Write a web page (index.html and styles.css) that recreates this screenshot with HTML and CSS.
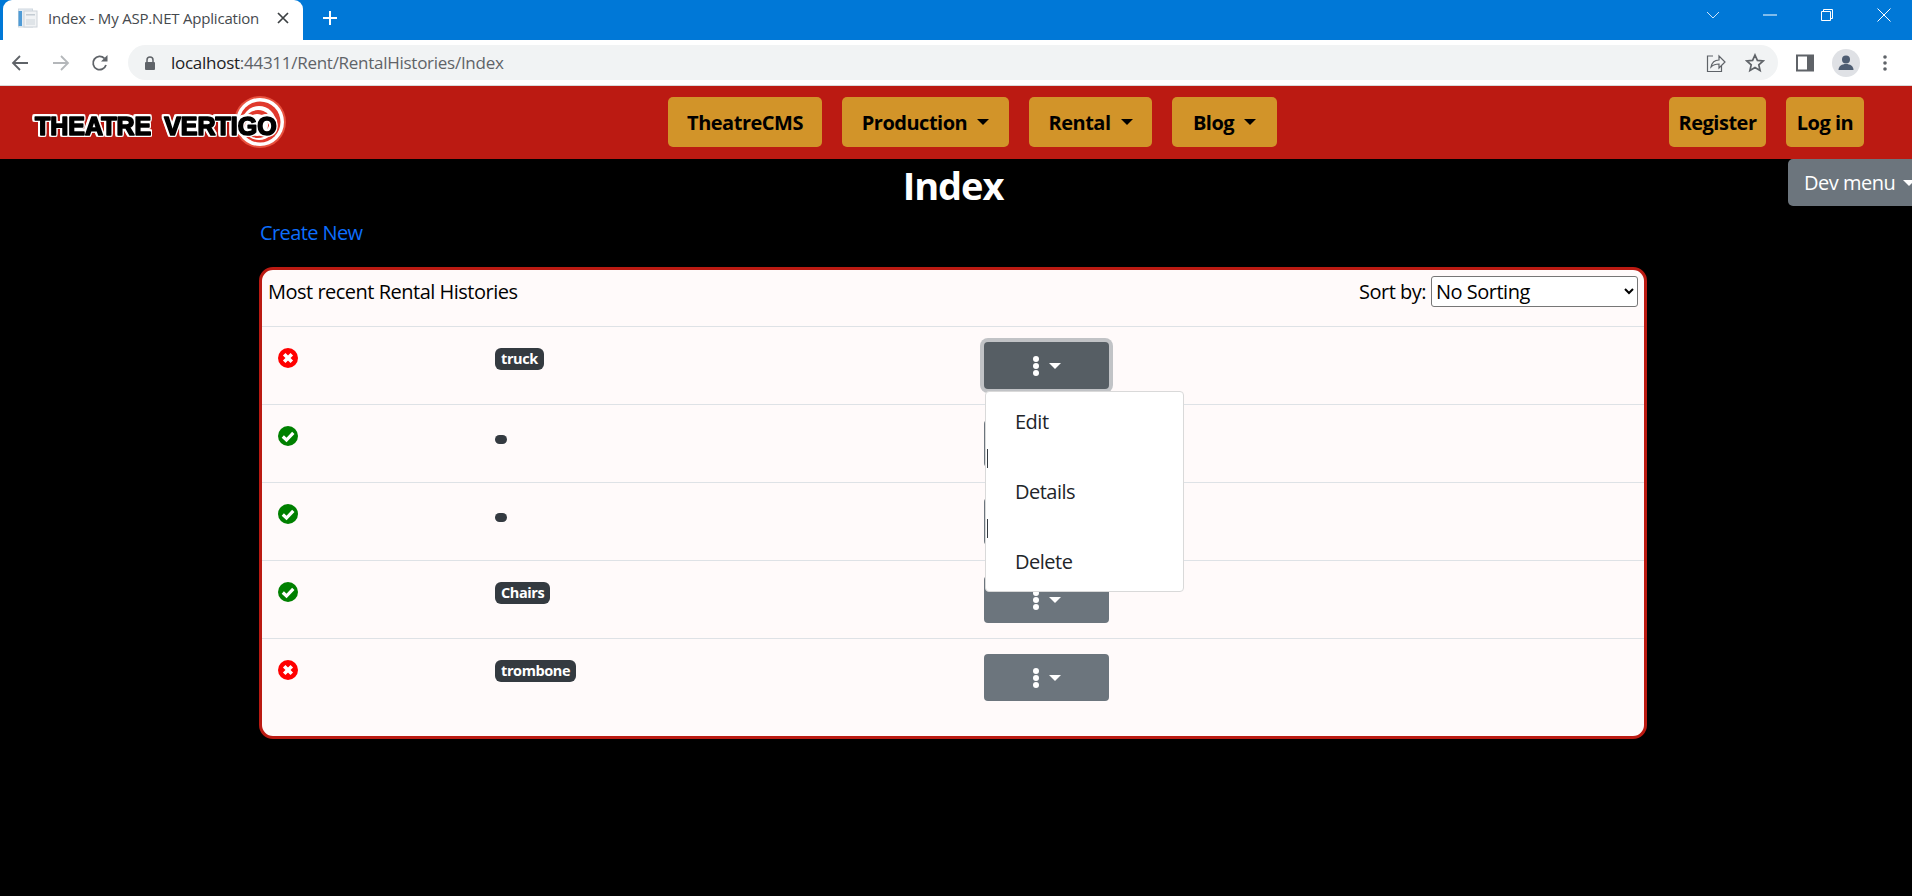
FILE: index.html
```html
<!DOCTYPE html>
<html lang="en">
<head>
<meta charset="utf-8">
<title>Index - My ASP.NET Application</title>
<link rel="stylesheet" href="styles.css">
</head>
<body>
<div class="tabbar">
  <div class="tab">
    <svg class="favicon" viewBox="0 0 20 20" width="20" height="20"><rect x="0.5" y="1" width="14" height="18" fill="#e6edf3" stroke="#cfd8df"/><rect x="0.5" y="3" width="3.5" height="15" fill="#4f9bd6"/><rect x="6" y="3" width="13" height="16" fill="#f1f3f5" stroke="#cdd3d9"/><rect x="8" y="11" width="9" height="6" fill="#dfe4e8"/><rect x="8" y="6" width="9" height="1.5" fill="#c4ccd3"/></svg>
    <span class="tab-title">Index - My ASP.NET Application</span>
    <svg class="tab-close" viewBox="0 0 12 12" width="12" height="12"><path d="M1 1l10 10M11 1L1 11" stroke="#3c4043" stroke-width="1.7" fill="none"/></svg>
  </div>
  <svg class="newtab" viewBox="0 0 14 14" width="14" height="14"><path d="M7 0v14M0 7h14" stroke="#fff" stroke-width="2" fill="none"/></svg>
  <div class="winctl">
    <svg viewBox="0 0 14 14" width="14" height="14"><path d="M1 4l6 6 6-6" stroke="#cfe4f7" fill="none"/></svg>
    <svg viewBox="0 0 14 14" width="14" height="14"><path d="M0 7h14" stroke="#fff" fill="none"/></svg>
    <svg viewBox="0 0 14 14" width="14" height="14"><path d="M1.5 3.5h9v9h-9zM3.5 3.5v-2h9v9h-2" stroke="#fff" fill="none"/></svg>
    <svg viewBox="0 0 14 14" width="14" height="14"><path d="M0.5 0.5l13 13M13.5 0.5l-13 13" stroke="#fff" fill="none"/></svg>
  </div>
</div>
<div class="toolbar">
  <svg class="tool tool-back" viewBox="0 0 18 18" width="18" height="18"><path d="M17 9H2M9 2L2 9l7 7" stroke="#5f6368" stroke-width="1.8" fill="none"/></svg>
  <svg class="tool tool-fwd" viewBox="0 0 18 18" width="18" height="18"><path d="M1 9h15M9 2l7 7-7 7" stroke="#b4b7ba" stroke-width="1.8" fill="none"/></svg>
  <svg class="tool tool-reload" viewBox="0 0 18 18" width="18" height="18"><path d="M15 11a6.6 6.6 0 1 1-1.6-6.6" stroke="#5f6368" stroke-width="1.8" fill="none"/><path d="M16.5 1v6.5H10z" fill="#5f6368"/></svg>
  <div class="omnibox">
    <svg class="lock" viewBox="0 0 12 14" width="12" height="14"><path d="M3 6V4a3 3 0 0 1 6 0v2" stroke="#5f6368" stroke-width="1.5" fill="none"/><rect x="1" y="6" width="10" height="8" rx="1" fill="#5f6368"/></svg>
    <span class="url"><span class="host">localhost</span>:44311/Rent/RentalHistories/Index</span>
    <svg class="omni-share" viewBox="0 0 20 20" width="20" height="20"><path d="M7 3H1.5v15.500h14V13" stroke="#5f6368" stroke-width="1.2" fill="none"/><path d="M5 14c1-5 4-7 8-7V3l6 6-6 6v-4c-3 0-6 1-8 3z" stroke="#5f6368" stroke-width="1.2" fill="#f1f3f4"/></svg>
    <svg class="omni-star" viewBox="0 0 20 20" width="20" height="20"><path d="M10 2l2.400 5.400 5.800.6-4.400 3.900 1.300 5.700L10 14.600l-5.100 3 1.300-5.700L1.800 8l5.800-.6z" stroke="#5f6368" stroke-width="1.700" fill="none"/></svg>
  </div>
  <svg class="side" viewBox="0 0 20 18" width="20" height="18"><rect x="1" y="0.500" width="18" height="17" fill="#5f6368"/><rect x="3" y="2.500" width="9" height="13" fill="#fff"/></svg>
  <div class="avatar"><svg viewBox="0 0 20 20" width="20" height="20"><circle cx="10" cy="6.500" r="4" fill="#4e5d72"/><path d="M2.500 17c0-4 3.500-6 7.500-6s7.500 2 7.500 6z" fill="#4e5d72"/></svg></div>
  <svg class="kebab" viewBox="0 0 4 18" width="4" height="18"><circle cx="2" cy="3" r="1.800" fill="#5f6368"/><circle cx="2" cy="9" r="1.800" fill="#5f6368"/><circle cx="2" cy="15" r="1.800" fill="#5f6368"/></svg>
</div>

<nav class="nav">
  <a class="brand" href="#">
    <svg class="logo" viewBox="0 0 256 54" width="256" height="54">
      <circle cx="227" cy="27" r="26" fill="#e8523f"/>
      <circle cx="227" cy="27" r="24" fill="#fff"/>
      <circle cx="227" cy="27" r="20.500" fill="#e0392c"/>
      <circle cx="226" cy="28" r="17" fill="#fff"/>
      <circle cx="225" cy="29" r="14" fill="#e0392c"/>
      <circle cx="224" cy="30" r="11" fill="#fff"/>
      <text class="logo-text" x="2" y="40">THEATRE VERTIGO</text>
    </svg>
  </a>
  <div class="nav-main">
    <a class="nbtn btn-cms" href="#">TheatreCMS</a>
    <a class="nbtn btn-prod" href="#">Production<i class="caret"></i></a>
    <a class="nbtn btn-rent" href="#">Rental<i class="caret"></i></a>
    <a class="nbtn btn-blog" href="#">Blog<i class="caret"></i></a>
  </div>
  <div class="nav-right">
    <a class="nbtn btn-reg" href="#">Register</a>
    <a class="nbtn btn-log" href="#">Log in</a>
  </div>
</nav>

<button class="devmenu">Dev menu<i class="caret caret-white"></i></button>

<main class="page">
  <h1 class="title">Index</h1>
  <p class="create"><a href="#">Create New</a></p>
  <section class="card">
    <header class="card-head">
      <span>Most recent Rental Histories</span>
      <label class="sort">Sort by:
        <select><option>No Sorting</option></select>
      </label>
    </header>
    <div class="row">
      <svg class="stat" viewBox="0 0 20 20" width="20" height="20"><circle cx="10" cy="10" r="10" fill="#f00"/><path d="M6.200 6.200l7.600 7.600M13.800 6.200l-7.600 7.600" stroke="#fff" stroke-width="3.600" fill="none"/></svg>
      <div><span class="badge">truck</span></div>
      <div class="cell-menu">
        <button class="act act-open"><svg class="dots" viewBox="0 0 6 20" width="6" height="20"><circle cx="3" cy="3" r="3" fill="#fff"/><circle cx="3" cy="10" r="3" fill="#fff"/><circle cx="3" cy="17" r="3" fill="#fff"/></svg><i class="caret caret-white"></i></button>
        <div class="menu">
          <a href="#">Edit</a>
          <a href="#">Details</a>
          <a href="#">Delete</a>
          <i class="sliver sliver-a"></i>
          <i class="sliver sliver-b"></i>
        </div>
      </div>
    </div>
    <div class="row">
      <svg class="stat" viewBox="0 0 20 20" width="20" height="20"><circle cx="10" cy="10" r="10" fill="#008000"/><path d="M4.800 10.500l3.700 3.500 6.800-7.200" stroke="#fff" stroke-width="3.200" fill="none"/></svg>
      <div><span class="badge badge-empty"></span></div>
      <div><button class="act"><svg class="dots" viewBox="0 0 6 20" width="6" height="20"><circle cx="3" cy="3" r="3" fill="#fff"/><circle cx="3" cy="10" r="3" fill="#fff"/><circle cx="3" cy="17" r="3" fill="#fff"/></svg><i class="caret caret-white"></i></button></div>
    </div>
    <div class="row">
      <svg class="stat" viewBox="0 0 20 20" width="20" height="20"><circle cx="10" cy="10" r="10" fill="#008000"/><path d="M4.800 10.500l3.700 3.500 6.800-7.200" stroke="#fff" stroke-width="3.200" fill="none"/></svg>
      <div><span class="badge badge-empty"></span></div>
      <div><button class="act"><svg class="dots" viewBox="0 0 6 20" width="6" height="20"><circle cx="3" cy="3" r="3" fill="#fff"/><circle cx="3" cy="10" r="3" fill="#fff"/><circle cx="3" cy="17" r="3" fill="#fff"/></svg><i class="caret caret-white"></i></button></div>
    </div>
    <div class="row">
      <svg class="stat" viewBox="0 0 20 20" width="20" height="20"><circle cx="10" cy="10" r="10" fill="#008000"/><path d="M4.800 10.500l3.700 3.500 6.800-7.200" stroke="#fff" stroke-width="3.200" fill="none"/></svg>
      <div><span class="badge">Chairs</span></div>
      <div><button class="act"><svg class="dots" viewBox="0 0 6 20" width="6" height="20"><circle cx="3" cy="3" r="3" fill="#fff"/><circle cx="3" cy="10" r="3" fill="#fff"/><circle cx="3" cy="17" r="3" fill="#fff"/></svg><i class="caret caret-white"></i></button></div>
    </div>
    <div class="row">
      <svg class="stat" viewBox="0 0 20 20" width="20" height="20"><circle cx="10" cy="10" r="10" fill="#f00"/><path d="M6.200 6.200l7.600 7.600M13.800 6.200l-7.600 7.600" stroke="#fff" stroke-width="3.600" fill="none"/></svg>
      <div><span class="badge">trombone</span></div>
      <div><button class="act"><svg class="dots" viewBox="0 0 6 20" width="6" height="20"><circle cx="3" cy="3" r="3" fill="#fff"/><circle cx="3" cy="10" r="3" fill="#fff"/><circle cx="3" cy="17" r="3" fill="#fff"/></svg><i class="caret caret-white"></i></button></div>
    </div>
  </section>
</main>
</body>
</html>
```
FILE: styles.css
```css
* { box-sizing: border-box; }
html, body { margin: 0; padding: 0; height: 100%; overflow: hidden; }
body {
  background: #000;
  color: #000;
  font-family: "Open Sans", "Noto Sans", sans-serif;
  font-size: 20px;
  letter-spacing: -0.5px;
  position: relative;
}
a { text-decoration: none; }

/* browser frame */
.tabbar { height: 40px; background: #0078d7; display: flex; align-items: center; }
.tab {
  width: 300px; height: 40px; margin-left: 3px; background: #fff;
  border-radius: 9px 9px 0 0; display: flex; align-items: center;
  padding: 0 14px 4px 15px; position: relative;
}
.favicon { flex: none; }
.tab-title { margin-left: 10px; font-size: 15px; letter-spacing: -0.2px; color: #45494d; white-space: nowrap; flex: 1; }
.tab-close { flex: none; margin-right: 0; }
.newtab { margin-left: 20px; margin-bottom: 4px; }
.winctl { margin-left: auto; display: flex; gap: 43px; padding-right: 21px; margin-bottom: 10px; }
.toolbar {
  height: 46px; background: #fff; border-bottom: 1px solid #d9d9d9;
  display: flex; align-items: center;
}
.tool { flex: none; }
.tool-back { margin-left: 11px; }
.tool-fwd { margin-left: 23px; }
.tool-reload { margin-left: 21px; }
.omnibox {
  height: 35px; width: 1650px; margin-left: 19px; background: #f1f3f4; border-radius: 18px;
  display: flex; align-items: center; padding: 0 13px 0 16px;
}
.lock { flex: none; }
.url { margin-left: 15px; font-size: 17px; letter-spacing: -0.27px; color: #5f6368; white-space: nowrap; flex: 1; }
.host { color: #202124; }
.omni-share { flex: none; margin-right: 19px; }
.omni-star { flex: none; }
.side { margin-left: 17px; flex: none; }
.avatar {
  width: 28px; height: 28px; border-radius: 50%; background: #dfe1e5; margin-left: 17px; flex: none;
  display: flex; align-items: center; justify-content: center;
}
.kebab { margin-left: 23px; flex: none; }

/* site navbar */
.nav { height: 73px; background: #bb1a12; display: flex; align-items: center; padding-bottom: 1px; }
.brand { flex: 0 0 668px; padding: 0 0 0 33px; display: flex; align-items: center; }
.logo { display: block; overflow: visible; }
.logo-text {
  font-family: "Liberation Sans", sans-serif; font-weight: 700; font-size: 25px; letter-spacing: 0; word-spacing: 6px;
  fill: #000; stroke: #000; stroke-width: 1.6px; stroke-linejoin: round;
  filter: drop-shadow(1.6px 0 0 #fff) drop-shadow(-1.6px 0 0 #fff) drop-shadow(0 1.6px 0 #fff) drop-shadow(0 -1.6px 0 #fff);
}
.nav-main { display: flex; gap: 20px; }
.nav-right { display: flex; gap: 20px; margin-left: auto; padding-right: 48px; }
.nbtn {
  height: 50px; background: #d29429; color: #000; font-weight: 700; border-radius: 5px;
  display: flex; align-items: center; justify-content: center; white-space: nowrap;
}
.btn-cms { width: 154px; }
.btn-prod { width: 167px; }
.btn-rent { width: 123px; }
.btn-blog { width: 105px; }
.btn-reg { width: 97px; }
.btn-log { width: 78px; }
.caret {
  display: inline-block; width: 0; height: 0; margin-left: 10px;
  border-top: 6px solid #000; border-left: 6px solid transparent; border-right: 6px solid transparent;
  flex: none;
}
.caret-white { border-top-color: #fff; }

.devmenu {
  position: absolute; top: 159px; left: 1788px; width: 150px; height: 47px;
  background: #6c757d; color: #fff; border: 0; border-radius: 5px;
  font: inherit; letter-spacing: inherit; text-align: left; padding: 0 0 0 16px;
  display: flex; align-items: center;
}
.devmenu .caret { margin-left: 8px; }

/* page */
.page { width: 1388px; margin-left: 259px; }
.title { margin: 0; font-size: 38px; line-height: 48px; letter-spacing: -1.1px; padding-top: 2px; color: #fff; font-weight: 700; text-align: center; }
.create { margin: 0; height: 58px; padding-top: 9px; padding-left: 1px; line-height: 30px; letter-spacing: -0.6px; }
.create a { color: #0d6efd; }
.card {
  height: 472px; background: #fffafa; border: 3px solid #bb1a12; border-radius: 14px;
  overflow: visible;
}
.card-head {
  height: 56px; padding: 7px 6px 0 6px; display: flex; justify-content: space-between;
  line-height: 30px; color: #000;
}
.sort { display: flex; gap: 5px; align-items: flex-start; }
.sort select {
  width: 207px; height: 31px; font: inherit; letter-spacing: inherit; padding: 0;
  background: #fff; color: #000; border: 1px solid #767676; border-radius: 3px; margin: -1px 0 0;
}
.row {
  height: 78px; border-top: 1px solid #dee2e6; padding: 15px 0 0 16px;
  display: grid; grid-template-columns: 217px 489px 1fr;
}
.stat { margin-top: 6px; display: block; margin-left: -0.500px; }
.badge {
  display: inline-block; background: #343a40; color: #fff; font-weight: 700; font-size: 14.500px;
  letter-spacing: -0.4px; line-height: 22px; height: 22px; padding: 0 6px; border-radius: 6px; margin-top: 6px; vertical-align: top;
}
.badge-empty { width: 12px; height: 9px; padding: 0; border-radius: 5px; margin-top: 15px; }
.cell-menu { position: relative; }
.act {
  width: 125px; height: 47px; background: #6c757d; border: 0; border-radius: 4px; padding: 0;
  display: flex; align-items: center; justify-content: center; gap: 0;
}
.act .caret { margin-left: 10px; margin-top: 1px; }
.act-open { background: #565e64; box-shadow: 0 0 0 4px #c1c3c6; }
.menu {
  position: absolute; top: 49px; left: 1px; width: 199px; height: 201px; z-index: 5;
  background: #fff; border: 1px solid #d9d9d9; border-radius: 4px; padding: 8px 0;
  display: flex; flex-direction: column; gap: 26px;
}
.menu a { height: 44px; line-height: 44px; padding-left: 29px; color: #212529; font-size: 20px; }
.sliver { position: absolute; left: 1px; width: 1px; height: 19px; background: #343a40; }
.sliver-a { top: 57px; }
.sliver-b { top: 127px; }
```
